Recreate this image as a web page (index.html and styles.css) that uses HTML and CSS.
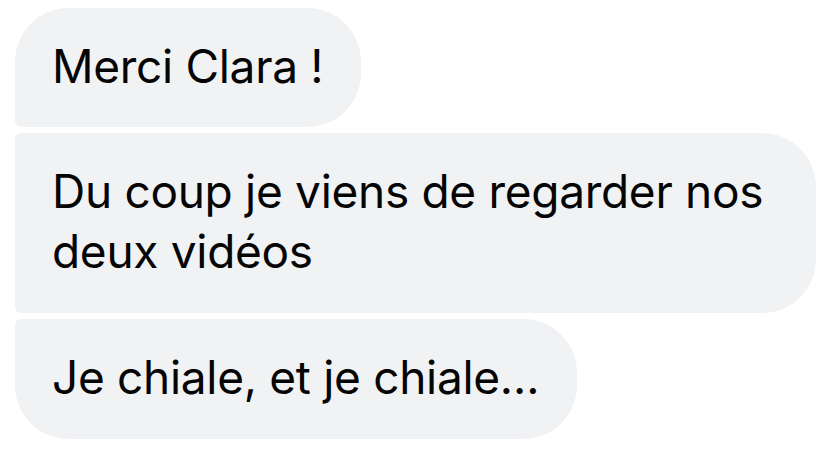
FILE: index.html
```html
<!DOCTYPE html>
<html lang="fr">
<head>
<meta charset="utf-8">
<link rel="stylesheet" href="styles.css">
</head>
<body>
<div class="thread">
  <div class="bubble first">Merci Clara !</div>
  <div class="bubble middle">Du coup je viens de regarder nos deux vidéos</div>
  <div class="bubble last">Je chiale, et je chiale…</div>
</div>
</body>
</html>
```
FILE: styles.css
```css
html, body {
  margin: 0;
  padding: 0;
  background: #ffffff;
}
.thread {
  display: flex;
  flex-direction: column;
  align-items: flex-start;
  gap: 6px;
  padding: 8px 20px 0 15px;
}
.bubble {
  box-sizing: border-box;
  max-width: 801px;
  background: #f1f2f4;
  color: #050505;
  font-family: "Inter", "Liberation Sans", sans-serif;
  font-size: 46px;
  line-height: 60px;
  letter-spacing: -0.3px;
  padding: 28px 38px 31px 37px;
  border-radius: 6px 54px 54px 6px;
}
.bubble.first {
  border-top-left-radius: 54px;
}
.bubble.middle {
  width: 801px;
  padding-bottom: 32px;
}
.bubble.last {
  border-bottom-left-radius: 54px;
  padding-bottom: 32px;
}
```
